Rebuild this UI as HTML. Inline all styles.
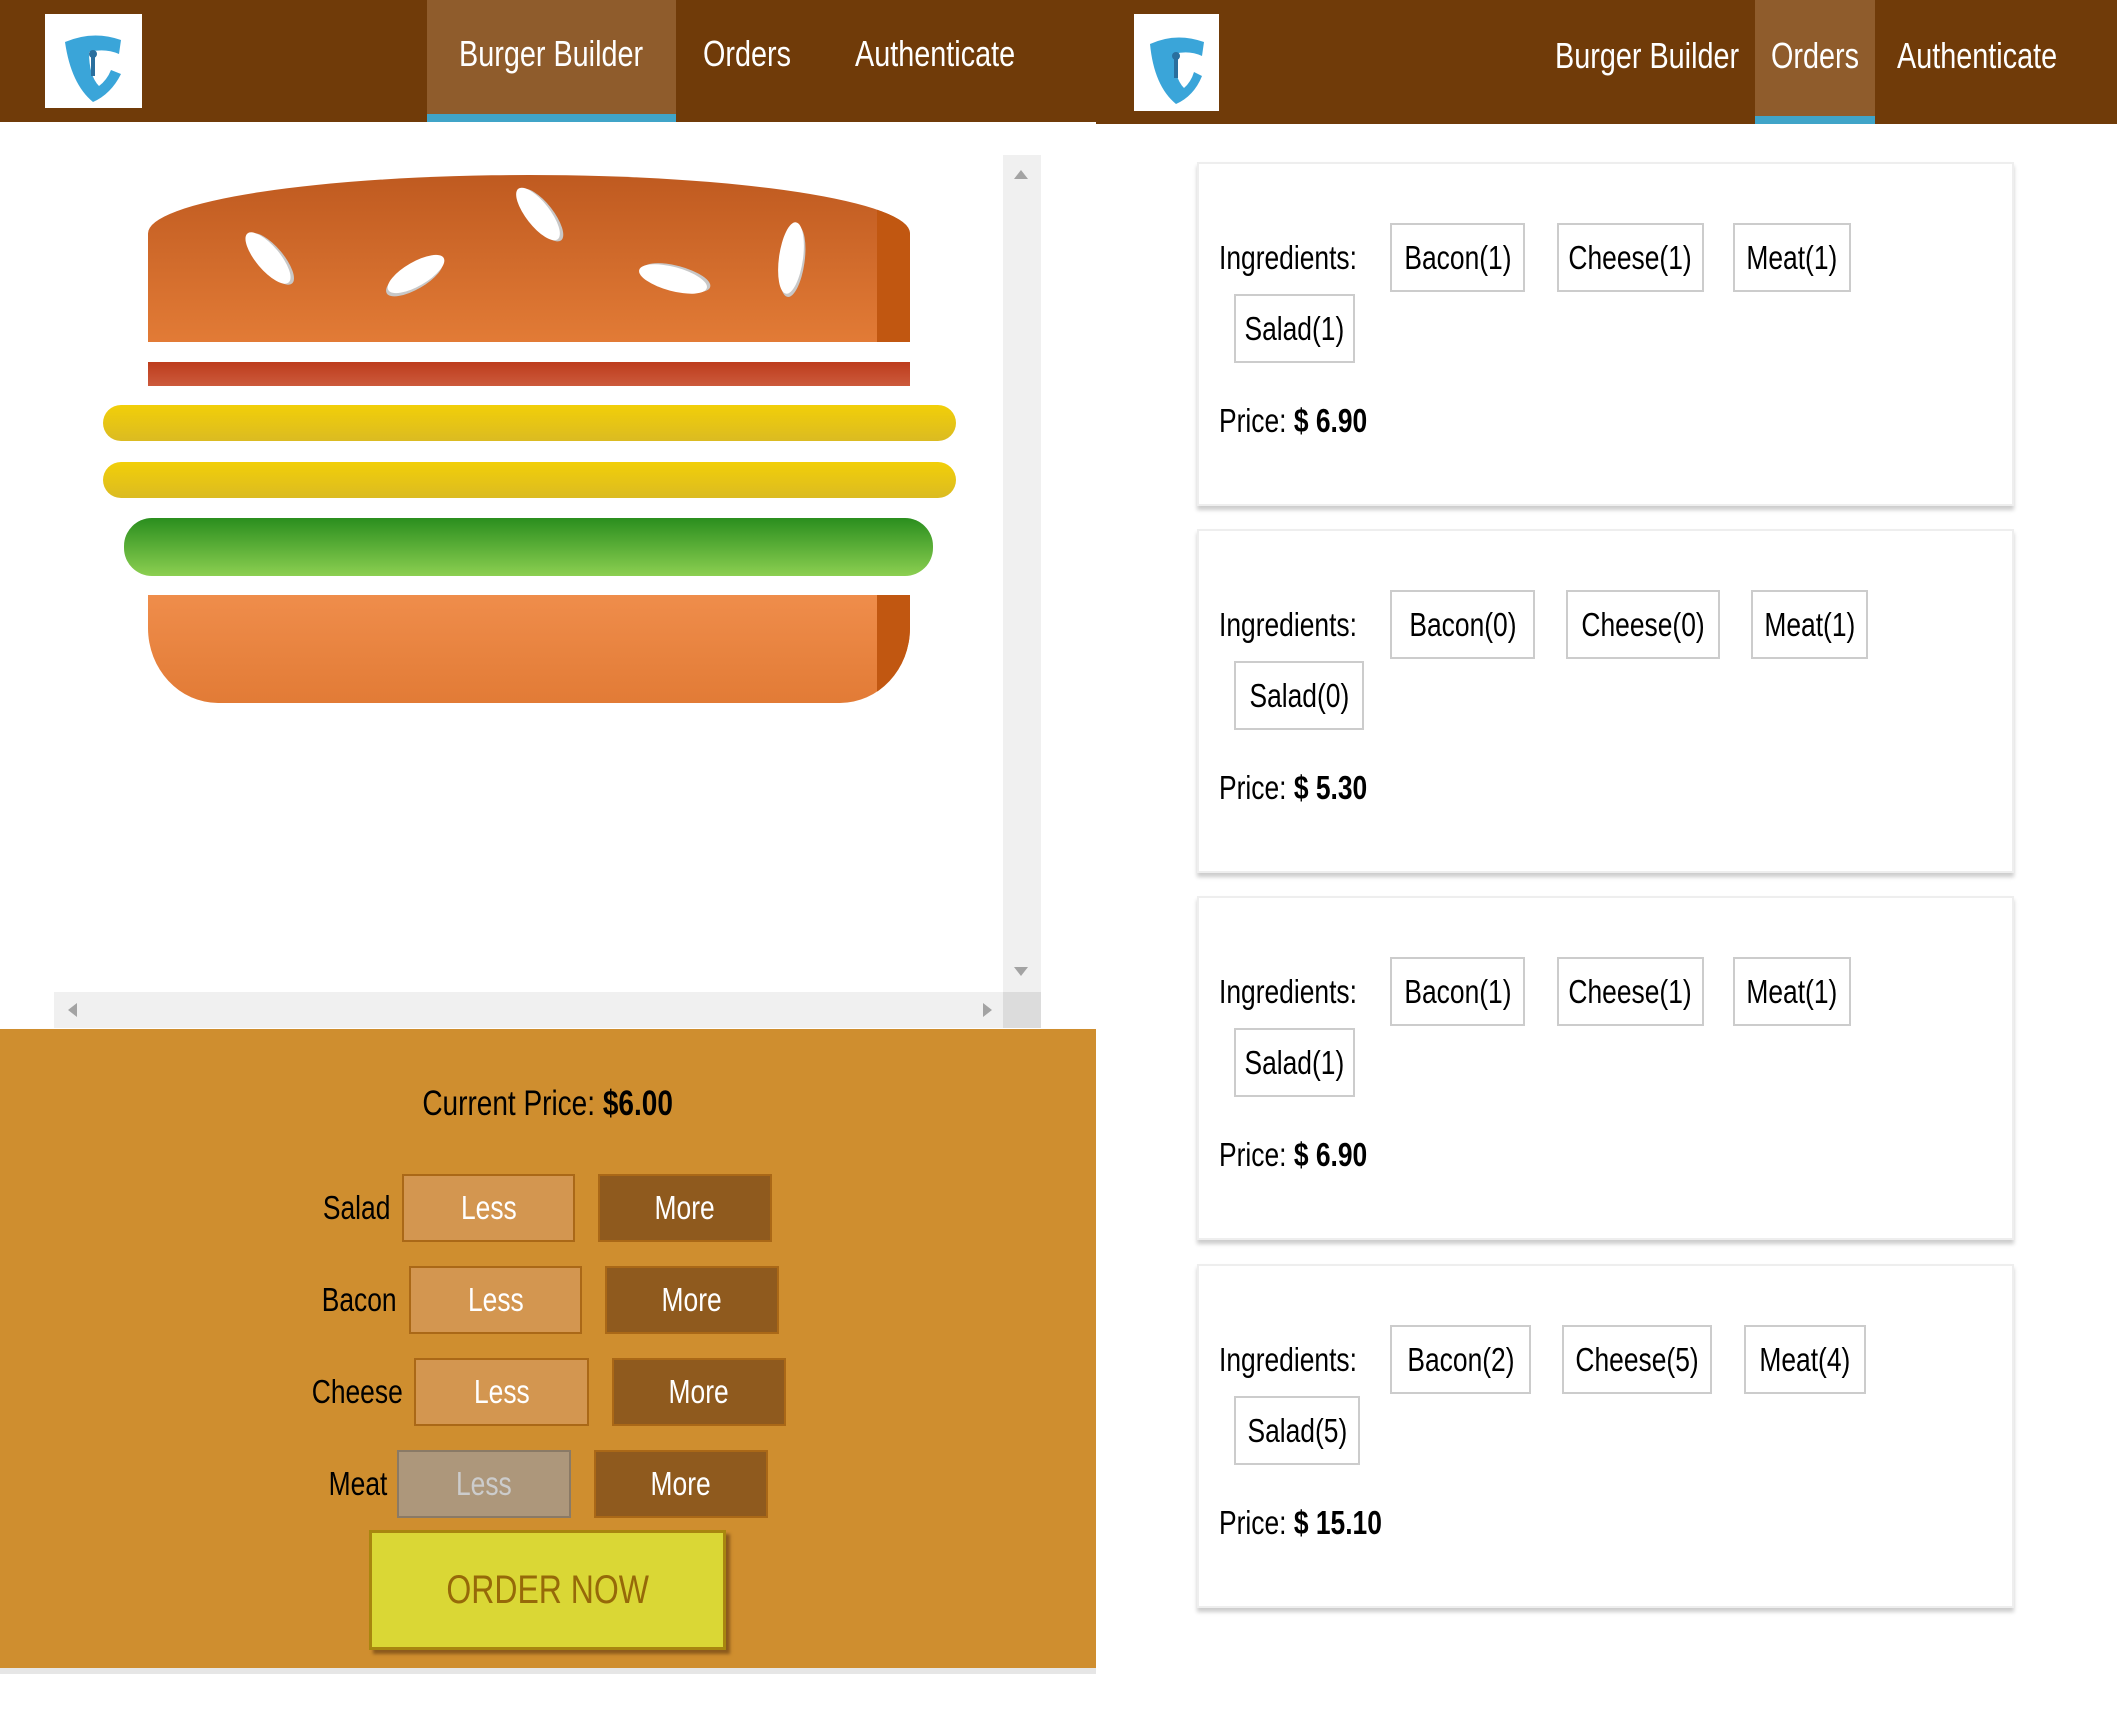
<!DOCTYPE html>
<html><head><meta charset="utf-8">
<style>
*{margin:0;padding:0;box-sizing:border-box}
body{width:2117px;height:1717px;background:#fff;position:relative;overflow:hidden;font-family:"Liberation Sans",sans-serif;}
.abs{position:absolute}
.c{display:inline-block;transform:scaleX(.8);white-space:nowrap}
.cl{display:inline-block;transform:scaleX(.8);transform-origin:0 50%;white-space:nowrap}
.nav{background:#703B09;}
.logo{background:#fff;position:absolute}
.nt{position:absolute;color:#fff;font-size:36px;display:flex;align-items:center;justify-content:center;white-space:nowrap}
.act{background:#8F5C2C;}
.act:after{content:"";position:absolute;left:0;right:0;bottom:0;height:8px;background:#40A4C8}
.card{position:absolute;left:1197px;width:817px;height:344px;background:#fff;border:2px solid #eee;box-shadow:0 4px 4px #ccc}
.card .lbl{position:absolute;left:20px;font-size:33px;color:#000;line-height:69px}
.card .b{position:absolute;height:69px;border:2px solid #ccc;font-size:33px;display:flex;align-items:center;justify-content:center;color:#000}
.card .p{position:absolute;left:20px;top:238px;font-size:33px}
.btn{position:absolute;height:68px;font-size:33px;color:#fff;display:flex;align-items:center;justify-content:center;border:2px solid #AA6817}
.less{background:#D39650}
.more{background:#8F5A1E}
.rl{position:absolute;font-size:33px;color:#000;text-align:right;width:200px;line-height:68px}
.rl .c{transform-origin:100% 50%}
.seed{position:absolute;background:#fff;border-radius:50%;box-shadow:2px 3px 0 #c8c8c8}
</style></head><body>

<!-- left nav -->
<div class="abs nav" style="left:0;top:0;width:1096px;height:122px"></div>
<div class="logo" style="left:45px;top:14px;width:97px;height:94px">
<svg width="97" height="94" viewBox="0 0 97 94"><path d="M20 28 Q48 16 76 26 L74 40 Q60 34 44 38 Q44 62 54 72 Q62 66 66 56 L76 60 Q66 80 48 88 Q26 70 20 28Z" fill="#3aa5d9"/><path d="M48 38 L48 62" stroke="#2a6f9e" stroke-width="4"/><circle cx="48" cy="40" r="4" fill="#2a6f9e"/></svg></div>
<div class="nt act" style="left:427px;top:0;width:249px;height:122px;padding-bottom:14px"><span class="c">Burger Builder</span></div>
<div class="nt" style="left:690px;top:0;width:115px;height:122px;padding-bottom:14px"><span class="c">Orders</span></div>
<div class="nt" style="left:830px;top:0;width:210px;height:122px;padding-bottom:14px"><span class="c">Authenticate</span></div>

<!-- right nav -->
<div class="abs nav" style="left:1096px;top:0;width:1021px;height:124px"></div>
<div class="logo" style="left:1134px;top:14px;width:85px;height:97px">
<svg width="85" height="97" viewBox="0 0 85 97"><path d="M16 30 Q42 18 70 28 L68 42 Q55 36 40 40 Q40 64 50 74 Q57 68 60 58 L68 62 Q60 82 42 90 Q20 72 16 30Z" fill="#3aa5d9"/><path d="M42 40 L42 64" stroke="#2a6f9e" stroke-width="4"/><circle cx="42" cy="42" r="4" fill="#2a6f9e"/></svg></div>
<div class="nt" style="left:1550px;top:0;width:195px;height:124px;padding-bottom:12px"><span class="c">Burger Builder</span></div>
<div class="nt act" style="left:1755px;top:0;width:120px;height:124px;padding-bottom:12px"><span class="c">Orders</span></div>
<div class="nt" style="left:1880px;top:0;width:195px;height:124px;padding-bottom:12px"><span class="c">Authenticate</span></div>

<!-- scrollbars -->
<div class="abs" style="left:1003px;top:155px;width:38px;height:837px;background:#f0f0f0"></div>
<div class="abs" style="left:1014px;top:170px;width:0;height:0;border:7px solid transparent;border-bottom:9px solid #a3a3a3;border-top:0"></div>
<div class="abs" style="left:1014px;top:967px;width:0;height:0;border:7px solid transparent;border-top:9px solid #a3a3a3;border-bottom:0"></div>
<div class="abs" style="left:54px;top:992px;width:949px;height:36px;background:#f0f0f0"></div>
<div class="abs" style="left:1003px;top:992px;width:38px;height:36px;background:#dcdcdc"></div>
<div class="abs" style="left:68px;top:1003px;width:0;height:0;border:7px solid transparent;border-right:9px solid #a3a3a3;border-left:0"></div>
<div class="abs" style="left:983px;top:1003px;width:0;height:0;border:7px solid transparent;border-left:9px solid #a3a3a3;border-right:0"></div>

<!-- burger -->
<div class="abs" style="left:148px;top:175px;width:762px;height:167px;border-radius:50% 50% 0 0/ 35% 35% 0 0;background:linear-gradient(#bf5a20,#e27b36);overflow:hidden">
<div class="abs" style="right:0;top:0;width:33px;height:167px;background:#c15711"></div></div>
<div class="seed" style="left:256px;top:226px;width:24px;height:64px;transform:rotate(-40deg)"></div>
<div class="seed" style="left:404px;top:242px;width:24px;height:64px;transform:rotate(60deg)"></div>
<div class="seed" style="left:526px;top:182px;width:24px;height:64px;transform:rotate(-38deg)"></div>
<div class="seed" style="left:661px;top:244px;width:24px;height:70px;transform:rotate(-75deg)"></div>
<div class="seed" style="left:779px;top:222px;width:24px;height:72px;transform:rotate(8deg)"></div>
<div class="abs" style="left:148px;top:362px;width:762px;height:24px;background:linear-gradient(#bd3c1c,#cc5a3c)"></div>
<div class="abs" style="left:103px;top:405px;width:853px;height:36px;border-radius:18px;background:linear-gradient(#f2cf08,#dbbb22)"></div>
<div class="abs" style="left:103px;top:462px;width:853px;height:36px;border-radius:18px;background:linear-gradient(#f2cf08,#dbbb22)"></div>
<div class="abs" style="left:124px;top:518px;width:809px;height:58px;border-radius:28px;background:linear-gradient(#2a8e1e,#8ccf51)"></div>
<div class="abs" style="left:148px;top:595px;width:762px;height:108px;border-radius:0 0 70px 70px/0 0 75px 75px;background:linear-gradient(#ef8d4b,#e27b36);overflow:hidden">
<div class="abs" style="right:0;top:0;width:33px;height:108px;background:#c15711;border-radius:0 0 60px 0"></div></div>

<!-- build controls -->
<div class="abs" style="left:0;top:1029px;width:1096px;height:645px;background:#CF8E2F;border-bottom:6px solid #e6e6e6"></div>
<div class="abs" style="left:0;top:1084px;width:1096px;text-align:center;font-size:35px;color:#000"><span class="c">Current Price: <b>$6.00</b></span></div>

<div class="rl" style="left:190px;top:1174px"><span class="c">Salad</span></div>
<div class="btn less" style="left:402px;top:1174px;width:173px"><span class="c">Less</span></div>
<div class="btn more" style="left:598px;top:1174px;width:174px"><span class="c">More</span></div>
<div class="rl" style="left:197px;top:1266px"><span class="c">Bacon</span></div>
<div class="btn less" style="left:409px;top:1266px;width:173px"><span class="c">Less</span></div>
<div class="btn more" style="left:605px;top:1266px;width:174px"><span class="c">More</span></div>
<div class="rl" style="left:203px;top:1358px"><span class="c">Cheese</span></div>
<div class="btn less" style="left:414px;top:1358px;width:175px"><span class="c">Less</span></div>
<div class="btn more" style="left:612px;top:1358px;width:174px"><span class="c">More</span></div>
<div class="rl" style="left:187px;top:1450px"><span class="c">Meat</span></div>
<div class="btn" style="left:397px;top:1450px;width:174px;background:#AD977B;border-color:#8a7a66;color:#ccc"><span class="c">Less</span></div>
<div class="btn more" style="left:594px;top:1450px;width:174px"><span class="c">More</span></div>
<div class="abs" style="left:369px;top:1530px;width:357px;height:120px;background:#DAD735;border:3px solid #A8860F;box-shadow:4px 4px 3px #8c5b1d;color:#966909;font-size:40px;display:flex;align-items:center;justify-content:center"><span class="c">ORDER NOW</span></div>

<!-- orders -->
<div class="card" style="top:162px">
<div class="lbl" style="top:59px"><span class="cl">Ingredients:</span></div>
<div class="b" style="left:191px;top:59px;width:135px"><span class="c">Bacon(1)</span></div>
<div class="b" style="left:358px;top:59px;width:147px"><span class="c">Cheese(1)</span></div>
<div class="b" style="left:534px;top:59px;width:118px"><span class="c">Meat(1)</span></div>
<div class="b" style="left:35px;top:130px;width:121px"><span class="c">Salad(1)</span></div>
<div class="p"><span class="cl">Price: <b>$ 6.90</b></span></div></div>

<div class="card" style="top:529px">
<div class="lbl" style="top:59px"><span class="cl">Ingredients:</span></div>
<div class="b" style="left:191px;top:59px;width:145px"><span class="c">Bacon(0)</span></div>
<div class="b" style="left:367px;top:59px;width:154px"><span class="c">Cheese(0)</span></div>
<div class="b" style="left:552px;top:59px;width:117px"><span class="c">Meat(1)</span></div>
<div class="b" style="left:35px;top:130px;width:130px"><span class="c">Salad(0)</span></div>
<div class="p"><span class="cl">Price: <b>$ 5.30</b></span></div></div>

<div class="card" style="top:896px">
<div class="lbl" style="top:59px"><span class="cl">Ingredients:</span></div>
<div class="b" style="left:191px;top:59px;width:135px"><span class="c">Bacon(1)</span></div>
<div class="b" style="left:358px;top:59px;width:147px"><span class="c">Cheese(1)</span></div>
<div class="b" style="left:534px;top:59px;width:118px"><span class="c">Meat(1)</span></div>
<div class="b" style="left:35px;top:130px;width:121px"><span class="c">Salad(1)</span></div>
<div class="p"><span class="cl">Price: <b>$ 6.90</b></span></div></div>

<div class="card" style="top:1264px">
<div class="lbl" style="top:59px"><span class="cl">Ingredients:</span></div>
<div class="b" style="left:191px;top:59px;width:141px"><span class="c">Bacon(2)</span></div>
<div class="b" style="left:363px;top:59px;width:150px"><span class="c">Cheese(5)</span></div>
<div class="b" style="left:545px;top:59px;width:122px"><span class="c">Meat(4)</span></div>
<div class="b" style="left:35px;top:130px;width:126px"><span class="c">Salad(5)</span></div>
<div class="p"><span class="cl">Price: <b>$ 15.10</b></span></div></div>

</body></html>
